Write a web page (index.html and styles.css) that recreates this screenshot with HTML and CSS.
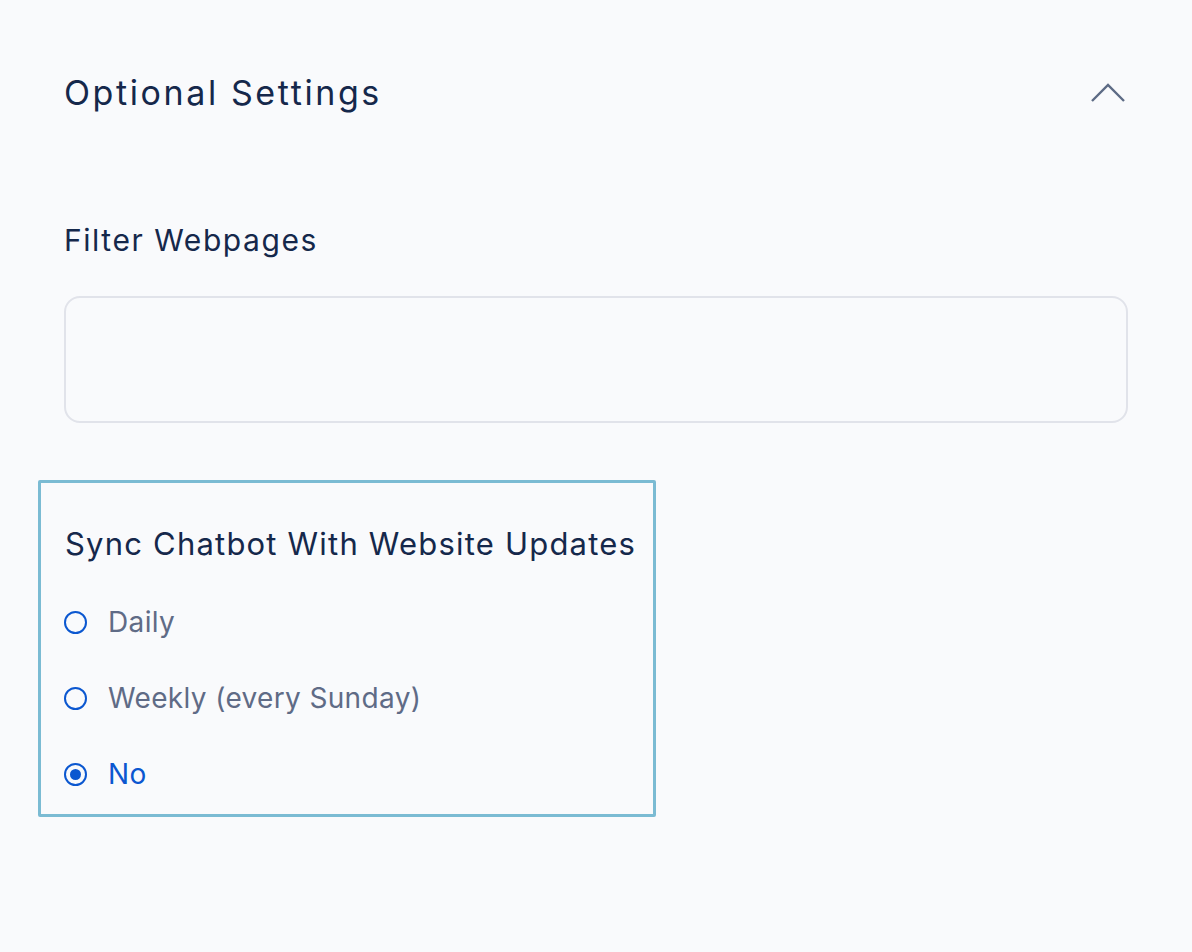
FILE: index.html
```html
<!DOCTYPE html>
<html>
<head>
<meta charset="utf-8">
<link rel="stylesheet" href="styles.css">
</head>
<body>
<main class="panel">
  <header class="section-head">
    <h2 class="section-title">Optional Settings</h2>
    <svg class="chevron" width="36" height="22" viewBox="0 0 36 22"><path d="M2 19 L18 3 L34 19" fill="none" stroke="#5d6b85" stroke-width="2.4"/></svg>
  </header>
  <div class="field">
    <label class="field-label">Filter Webpages</label>
    <div class="text-input"></div>
  </div>
  <div class="radio-group" role="radiogroup">
    <div class="group-title">Sync Chatbot With Website Updates</div>
    <div class="options">
      <div class="option"><span class="radio"></span><span class="opt-label">Daily</span></div>
      <div class="option"><span class="radio"></span><span class="opt-label">Weekly (every Sunday)</span></div>
      <div class="option selected"><span class="radio"></span><span class="opt-label">No</span></div>
    </div>
  </div>
</main>
</body>
</html>
```
FILE: styles.css
```css
html, body {
  margin: 0;
  background: #f9fafc;
  font-family: Inter, "Noto Sans", sans-serif;
  color: #15284b;
}
.panel {
  padding: 0 64px;
}
.section-head {
  display: flex;
  align-items: center;
  justify-content: space-between;
  height: 186px;
}
.section-title {
  margin: 0;
  font-size: 34px;
  font-weight: 400;
  letter-spacing: 2.6px;
  line-height: 40px;
}
.chevron {
  margin-right: 2px;
}
.field {
  padding-top: 36px;
}
.field-label {
  display: block;
  font-size: 30px;
  line-height: 36px;
  letter-spacing: 1.55px;
  margin-bottom: 38px;
}
.text-input {
  height: 127px;
  border: 2px solid #e1e3ea;
  border-radius: 16px;
  box-sizing: border-box;
}
.radio-group {
  margin: 57px 0 0 -26px;
  padding: 41px 17px 20px 24px;
  border: 3px solid #7bbbd3;
  border-radius: 2px;
  width: fit-content;
}
.group-title {
  font-size: 31px;
  line-height: 40px;
  letter-spacing: 1.2px;
  white-space: nowrap;
}
.options {
  display: flex;
  flex-direction: column;
  gap: 36px;
  margin-top: 38px;
}
.option {
  display: flex;
  align-items: center;
  gap: 20px;
  height: 40px;
}
.radio {
  flex: none;
  width: 23px;
  height: 23px;
  margin-left: -1px;
  margin-right: 1px;
  box-sizing: border-box;
  border: 2px solid #0b57d0;
  border-radius: 50%;
  display: flex;
  align-items: center;
  justify-content: center;
}
.selected .radio::after {
  content: "";
  width: 11px;
  height: 11px;
  border-radius: 50%;
  background: #0b57d0;
}
.opt-label {
  font-size: 28px;
  line-height: 40px;
  color: #5f6b86;
  letter-spacing: 0.35px;
}
.selected .opt-label {
  color: #0b57d0;
}
```
